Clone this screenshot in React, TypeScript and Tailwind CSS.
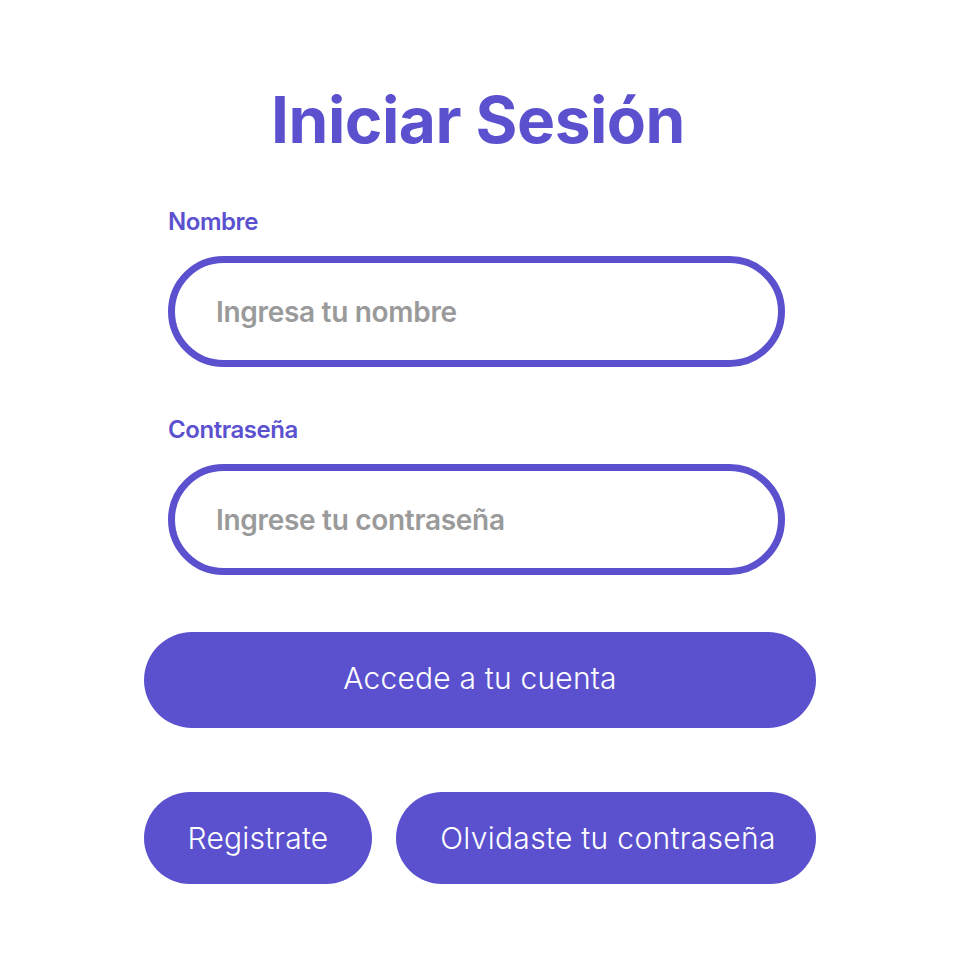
export default function App() {
  return (
    <div className="min-h-screen bg-white" style={{ fontFamily: 'Inter, "Liberation Sans", sans-serif' }}>
      <div className="ml-[144px] flex w-[672px] flex-col pt-[80px]">
        <h1 className="pr-[4px] text-center text-[64px] font-bold leading-[80px] tracking-[-0.5px] text-[#5b51cf]">
          Iniciar Sesión
        </h1>

        <div className="mt-[47px] flex flex-col px-[24px]">
          <label className="text-[24px] font-semibold leading-[30px] tracking-[-0.45px] text-[#5b51cf]">Nombre</label>
          <div className="mt-[19px] flex h-[111px] w-[617px] items-center rounded-full border-[7px] border-[#5b51cf] px-[41px]">
            <span className="text-[28px] font-semibold tracking-[-0.3px] text-[#9a9a9a]">Ingresa tu nombre</span>
          </div>

          <label className="mt-[48px] text-[24px] font-semibold leading-[30px] tracking-[-0.45px] text-[#5b51cf]">Contraseña</label>
          <div className="mt-[19px] flex h-[111px] w-[617px] items-center rounded-full border-[7px] border-[#5b51cf] px-[41px]">
            <span className="text-[28px] font-semibold tracking-[-0.3px] text-[#9a9a9a]">Ingrese tu contraseña</span>
          </div>
        </div>

        <button className="mt-[57px] flex h-[96px] w-full items-center justify-center rounded-full bg-[#5b51cf] pb-[4px] text-[30px] font-light tracking-[0.2px] text-white">
          Accede a tu cuenta
        </button>

        <div className="mt-[64px] flex gap-[24px]">
          <button className="flex h-[92px] w-[228px] items-center justify-center rounded-full bg-[#5b51cf] text-[30px] font-light tracking-[0.2px] text-white">
            Registrate
          </button>
          <button className="flex h-[92px] flex-1 items-center justify-center rounded-full bg-[#5b51cf] pl-[4px] text-[30px] font-light tracking-[0.3px] text-white">
            Olvidaste tu contraseña
          </button>
        </div>
      </div>
    </div>
  );
}
